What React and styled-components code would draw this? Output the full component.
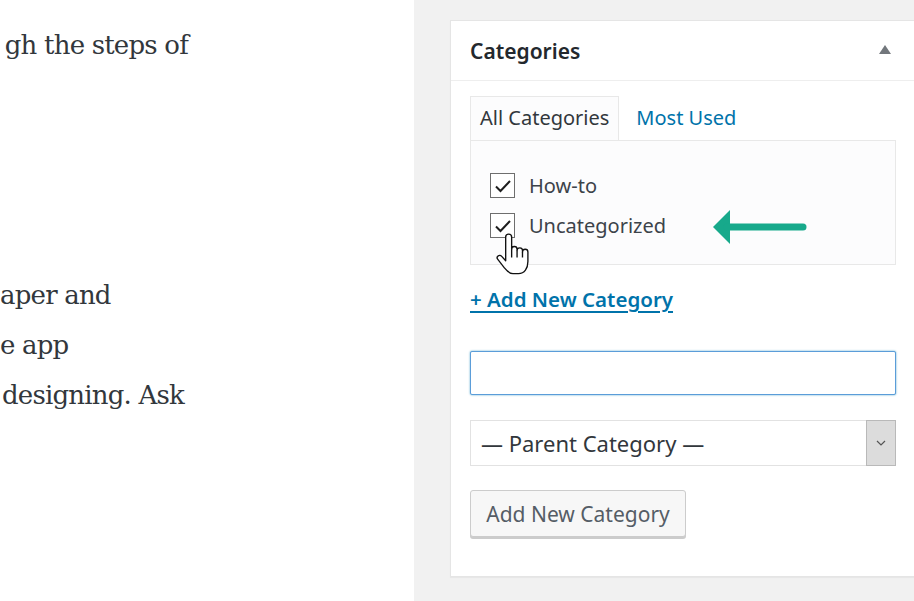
import React from "react";
import styled, { createGlobalStyle } from "styled-components";

const GlobalStyle = createGlobalStyle`
  html, body {
    margin: 0;
    padding: 0;
    background: #fff;
  }
  body {
    width: 914px;
    height: 601px;
    overflow: hidden;
  }
`;

const paragraphs = [
  [{ text: "gh the steps of", end: 188 }],
  [
    { text: "aper and", end: 110 },
    { text: "e app", end: 65 },
    { text: "designing. Ask", end: 184 },
  ],
];

const categories = ["How-to", "Uncategorized"];

const Checkbox = ({ children }) => (
  <CheckRow>
    <Box>
      <svg width="18" height="14" viewBox="0 0 18 14">
        <path d="M2 7.5 L6.5 12 L16 2" fill="none" stroke="#1e1e1e" strokeWidth="2" />
      </svg>
    </Box>
    <CheckLabel>{children}</CheckLabel>
  </CheckRow>
);

const HandCursor = () => (
  <Hand width="36" height="42" viewBox="0 0 26 31">
    <path
      d="M7.6 3 a2.2 2.2 0 0 1 4.4 0 V12 a2 2 0 0 1 4 0 v1 a2 2 0 0 1 4 0 v1 a2 2 0 0 1 4 0 V21 c0 5 -2.5 9 -7 9 H13 c-3 0 -4.5 -2 -6.5 -4.5 L1.8 19.5 a1.8 1.8 0 0 1 2.7 -2.4 L7.6 20.5 Z"
      fill="#fff"
      stroke="#111"
      strokeWidth="1"
      strokeLinejoin="round"
    />
    <path d="M12 12 v6 M16 13 v5 M20 14 v4" stroke="#111" strokeWidth="1" fill="none" />
  </Hand>
);

const GreenArrow = () => (
  <Arrow width="94" height="36" viewBox="0 0 94 36">
    <path d="M0 18 L17 1 L17 35 Z" fill="#17a98b" />
    <line x1="14" y1="18" x2="90" y2="18" stroke="#17a98b" strokeWidth="7" strokeLinecap="round" />
  </Arrow>
);

export default function App() {
  return (
    <>
      <GlobalStyle />
      <Page>
        <Content>
          {paragraphs.map((lines, i) => (
            <Paragraph key={i}>
              {lines.map((l) => (
                <Line key={l.text} $end={l.end}>
                  {l.text}
                </Line>
              ))}
            </Paragraph>
          ))}
        </Content>
        <Sidebar>
          <Panel>
            <PanelHeader>
              <PanelTitle>Categories</PanelTitle>
              <Toggle />
            </PanelHeader>
            <PanelBody>
              <Tabs>
                <Tab $active>All Categories</Tab>
                <Tab>Most Used</Tab>
              </Tabs>
              <TabPanel>
                {categories.map((c) => (
                  <Checkbox key={c}>{c}</Checkbox>
                ))}
                <HandCursor />
                <GreenArrow />
              </TabPanel>
              <AddLink href="#">+ Add New Category</AddLink>
              <TextInput type="text" />
              <Select>
                <SelectText>— Parent Category —</SelectText>
                <SelectButton>
                  <svg width="10" height="6" viewBox="0 0 10 6">
                    <path d="M1 1 L5 5 L9 1" fill="none" stroke="#555" strokeWidth="1.2" />
                  </svg>
                </SelectButton>
              </Select>
              <Button>Add New Category</Button>
            </PanelBody>
          </Panel>
        </Sidebar>
      </Page>
    </>
  );
}

const Page = styled.div`
  display: flex;
  width: 914px;
  height: 601px;
  overflow: hidden;
`;

const Content = styled.div`
  width: 414px;
  flex-shrink: 0;
  background: #fff;
  padding-top: 20px;
  font-family: "DejaVu Serif", "Liberation Serif", serif;
  font-size: 26px;
  letter-spacing: -0.8px;
  line-height: 50px;
  color: #32373c;
`;

const Paragraph = styled.div`
  & + & {
    margin-top: 200px;
  }
`;

const Line = styled.div`
  width: ${(p) => p.$end}px;
  white-space: nowrap;
  text-align: right;
`;

const Sidebar = styled.div`
  flex: 1;
  background: #f1f1f1;
  padding: 20px 0 0 36px;
  overflow: hidden;
  font-family: "Noto Sans", "Open Sans", sans-serif;
`;

const Panel = styled.div`
  width: 466px;
  height: 557px;
  box-sizing: border-box;
  background: #fff;
  border: 1px solid #e5e5e5;
  box-shadow: 0 1px 1px rgba(0, 0, 0, 0.04);
`;

const PanelHeader = styled.div`
  height: 59px;
  display: flex;
  align-items: center;
  justify-content: space-between;
  padding: 0 24px 0 19px;
  border-bottom: 1px solid #eee;
`;

const PanelTitle = styled.h2`
  margin: 0;
  font-size: 21px;
  font-weight: 600;
  color: #23282d;
`;

const Toggle = styled.span`
  width: 0;
  height: 0;
  border-left: 6px solid transparent;
  border-right: 6px solid transparent;
  border-bottom: 9px solid #72777c;
  margin-top: -2px;
`;

const PanelBody = styled.div`
  padding: 15px 19px 0;
  display: flex;
  flex-direction: column;
`;

const Tabs = styled.div`
  display: flex;
  height: 45px;
  margin-bottom: -1px;
  position: relative;
`;

const Tab = styled.div`
  display: flex;
  align-items: center;
  padding: 0 9px 2px 9px;
  font-size: 20px;
  color: ${(p) => (p.$active ? "#32373c" : "#0073aa")};
  background: ${(p) => (p.$active ? "#fcfcfd" : "transparent")};
  border: 1px solid ${(p) => (p.$active ? "#e8e8e8" : "transparent")};
  border-bottom: 1px solid ${(p) => (p.$active ? "#fcfcfd" : "transparent")};
  & + & {
    padding-left: 16px;
  }
`;

const TabPanel = styled.div`
  position: relative;
  height: 125px;
  box-sizing: border-box;
  border: 1px solid #e8e8e8;
  background: #fcfcfd;
  padding: 32px 19px 0;
  display: flex;
  flex-direction: column;
  gap: 15px;
`;

const CheckRow = styled.label`
  display: flex;
  align-items: center;
  gap: 14px;
  height: 25px;
`;

const Box = styled.span`
  width: 25px;
  height: 25px;
  box-sizing: border-box;
  border: 1.5px solid #6e6e6e;
  background: #fff;
  display: flex;
  align-items: center;
  justify-content: center;
`;

const CheckLabel = styled.span`
  font-size: 20px;
  color: #3c434a;
`;

const Hand = styled.svg`
  position: absolute;
  left: 24px;
  top: 92px;
`;

const Arrow = styled.svg`
  position: absolute;
  left: 242px;
  top: 68px;
`;

const AddLink = styled.a`
  margin-top: 21px;
  align-self: flex-start;
  font-size: 20.5px;
  font-weight: 600;
  color: #0073aa;
  text-decoration: underline;
  text-decoration-thickness: 2px;
  text-underline-offset: 4px;
  line-height: 26px;
`;

const TextInput = styled.input`
  margin-top: 39px;
  height: 44px;
  width: 100%;
  box-sizing: border-box;
  border: 1px solid #5b9dd9;
  box-shadow: 0 0 2px rgba(30, 140, 190, 0.8);
  border-radius: 2px;
  background: #fff;
  outline: none;
`;

const Select = styled.div`
  margin-top: 25px;
  height: 46px;
  display: flex;
  align-items: stretch;
  border: 1px solid #e2e2e2;
  box-sizing: border-box;
  background: #fff;
`;

const SelectText = styled.span`
  flex: 1;
  display: flex;
  align-items: center;
  padding-left: 10px;
  font-size: 22px;
  color: #32373c;
`;

const SelectButton = styled.span`
  width: 28px;
  display: flex;
  align-items: center;
  justify-content: center;
  background: #dcdcdc;
  border: 1px solid #b9b9b9;
  margin: -1px -1px -1px 0;
`;

const Button = styled.button`
  margin-top: 24px;
  align-self: flex-start;
  height: 47px;
  width: 216px;
  background: #f7f7f7;
  border: 1px solid #cccccc;
  border-radius: 3px;
  box-shadow: 0 2px 0 #cccccc;
  font-family: "Noto Sans", "Open Sans", sans-serif;
  font-size: 21px;
  color: #555d66;
  padding: 0;
`;
